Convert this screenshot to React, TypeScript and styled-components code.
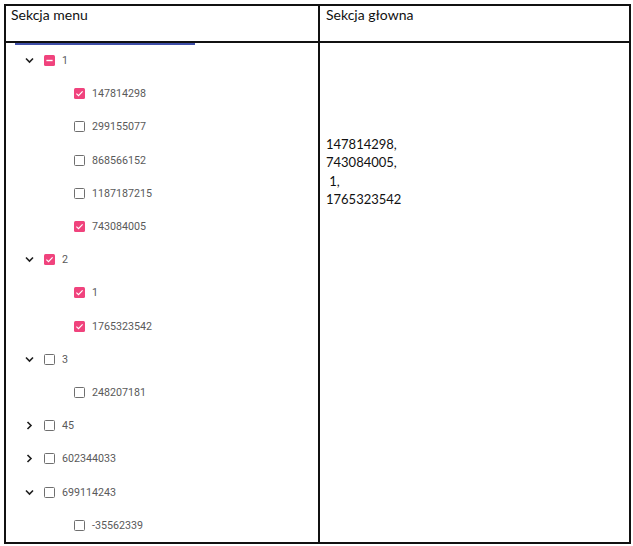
import React from "react";
import styled, { createGlobalStyle } from "styled-components";

const GlobalStyle = createGlobalStyle`
  html, body { margin: 0; padding: 0; background: #ffffff; }
  body { font-family: "Lato", "Liberation Sans", sans-serif; }
`;

const Page = styled.div`
  padding: 4px 0 0 4px;
`;

const Table = styled.div`
  display: grid;
  grid-template-columns: 314px 311px;
  grid-template-rows: 37px 501px;
  border-top: 2px solid #111;
  border-left: 2px solid #111;
  width: 625px;
`;

const Cell = styled.div<{ $pad?: string }>`
  border-right: 2px solid #111;
  border-bottom: 2px solid #111;
  padding: ${(p) => p.$pad ?? "0"};
  overflow: hidden;
  min-width: 0;
`;

const HeaderText = styled.div`
  font-family: "Lato", "Liberation Sans", sans-serif;
  font-size: 14px;
  line-height: 17px;
  color: #111;
`;

const ScrollEdge = styled.div`
  height: 2px;
  width: 180px;
  margin: 0 0 -1px 9px;
  background: #3f4fa8;
`;

const Row = styled.div<{ $level: number }>`
  height: 33.2px;
  display: flex;
  align-items: center;
  padding-left: ${(p) => 19 + p.$level * 30}px;
`;

const ChevronSlot = styled.span`
  width: 19px;
  height: 11px;
  display: flex;
  align-items: center;
  flex-shrink: 0;
`;

const Box = styled.span<{ $on: boolean }>`
  width: 11px;
  height: 11px;
  box-sizing: border-box;
  border-radius: 1.5px;
  flex-shrink: 0;
  display: flex;
  align-items: center;
  justify-content: center;
  background: ${(p) => (p.$on ? "#f0437d" : "transparent")};
  border: ${(p) => (p.$on ? "none" : "1.5px solid #6f6f6f")};
`;

const Label = styled.span`
  margin-left: 7px;
  font-family: "Roboto", "Liberation Sans", sans-serif;
  font-size: 10.7px;
  color: #5a5a5a;
  white-space: nowrap;
`;

const Output = styled.div`
  font-family: "Lato", "Liberation Sans", sans-serif;
  font-size: 13px;
  line-height: 18.3px;
  color: #111;
  white-space: pre;
`;

type State = "on" | "off" | "some";
interface Node {
  label: string;
  state: State;
  expanded?: boolean;
  children?: Node[];
}

const tree: Node[] = [
  {
    label: "1",
    state: "some",
    expanded: true,
    children: [
      { label: "147814298", state: "on" },
      { label: "299155077", state: "off" },
      { label: "868566152", state: "off" },
      { label: "1187187215", state: "off" },
      { label: "743084005", state: "on" },
    ],
  },
  {
    label: "2",
    state: "on",
    expanded: true,
    children: [
      { label: "1", state: "on" },
      { label: "1765323542", state: "on" },
    ],
  },
  {
    label: "3",
    state: "off",
    expanded: true,
    children: [{ label: "248207181", state: "off" }],
  },
  { label: "45", state: "off", expanded: false, children: [{ label: "x", state: "off" }] },
  { label: "602344033", state: "off", expanded: false, children: [{ label: "x", state: "off" }] },
  {
    label: "699114243",
    state: "off",
    expanded: true,
    children: [{ label: "-35562339", state: "off" }],
  },
];

const Chevron: React.FC<{ open: boolean }> = ({ open }) => (
  <svg width="9" height="9" viewBox="0 0 9 9">
    <path
      d={open ? "M1 2.5 L4.5 6 L8 2.5" : "M2.5 1 L6 4.5 L2.5 8"}
      fill="none"
      stroke="#1e1e1e"
      strokeWidth="1.6"
    />
  </svg>
);

const CheckBox: React.FC<{ state: State }> = ({ state }) => (
  <Box $on={state !== "off"}>
    {state === "on" && (
      <svg width="11" height="11" viewBox="0 0 11 11">
        <path d="M2.4 5.6 L4.5 7.6 L8.6 3.3" fill="none" stroke="#fff" strokeWidth="1.2" />
      </svg>
    )}
    {state === "some" && (
      <svg width="11" height="11" viewBox="0 0 11 11">
        <rect x="2.4" y="4.8" width="6.2" height="1.4" fill="#fff" />
      </svg>
    )}
  </Box>
);

const renderNodes = (nodes: Node[], level: number): React.ReactNode[] =>
  nodes.flatMap((n, i) => {
    const row = (
      <Row key={`${level}-${i}-${n.label}`} $level={level}>
        <ChevronSlot>{n.children && <Chevron open={!!n.expanded} />}</ChevronSlot>
        <CheckBox state={n.state} />
        <Label>{n.label}</Label>
      </Row>
    );
    const kids = n.children && n.expanded ? renderNodes(n.children, level + 1) : [];
    return [row, ...kids];
  });

export default function App() {
  return (
    <Page>
      <GlobalStyle />
      <Table>
        <Cell $pad="0 0 0 5px">
          <HeaderText>Sekcja menu</HeaderText>
        </Cell>
        <Cell $pad="0 0 0 6px">
          <HeaderText>Sekcja głowna</HeaderText>
        </Cell>
        <Cell>
          <ScrollEdge />
          {renderNodes(tree, 0)}
        </Cell>
        <Cell $pad="92px 0 0 6px">
          <Output>{"147814298,\n743084005,\n 1,\n1765323542"}</Output>
        </Cell>
      </Table>
    </Page>
  );
}
